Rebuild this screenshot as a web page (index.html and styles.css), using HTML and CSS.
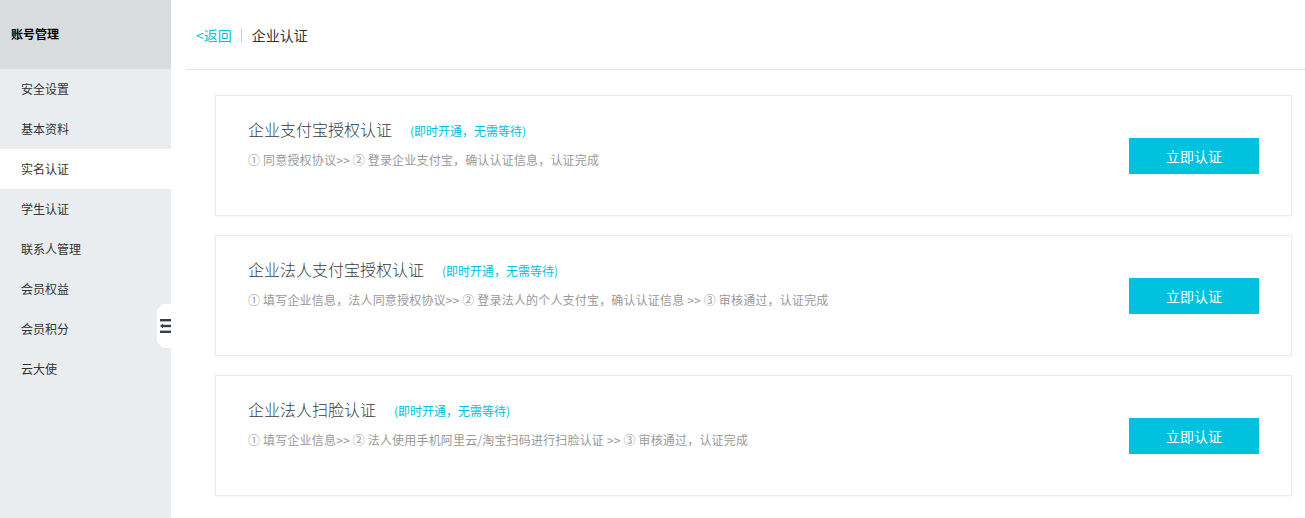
FILE: index.html
```html
<!DOCTYPE html>
<html lang="zh-CN">
<head>
<meta charset="utf-8">
<title>企业认证</title>
<link rel="stylesheet" href="styles.css">
</head>
<body>
<div class="page">
  <aside class="sidebar">
    <div class="side-title">账号管理</div>
    <ul class="side-menu">
      <li class="side-item">安全设置</li>
      <li class="side-item">基本资料</li>
      <li class="side-item active">实名认证</li>
      <li class="side-item">学生认证</li>
      <li class="side-item">联系人管理</li>
      <li class="side-item">会员权益</li>
      <li class="side-item">会员积分</li>
      <li class="side-item">云大使</li>
    </ul>
    <div class="collapse-tab">
      <svg width="11" height="14" viewBox="0 0 11 14" aria-hidden="true">
        <rect x="0" y="0" width="11" height="2.4" fill="#373d41"/>
        <rect x="3" y="5.8" width="8" height="2.4" fill="#373d41"/>
        <polygon points="0,7 3,4.6 3,9.4" fill="#373d41"/>
        <rect x="0" y="11.6" width="11" height="2.4" fill="#373d41"/>
      </svg>
    </div>
  </aside>
  <main class="main">
    <header class="main-header">
      <a class="back">&lt;返回</a>
      <span class="sep"></span>
      <span class="crumb">企业认证</span>
    </header>
    <section class="cards">
      <div class="card">
        <div class="card-info">
          <div class="card-title">企业支付宝授权认证<span class="tag">(即时开通，无需等待)</span></div>
          <div class="card-steps">① 同意授权协议&gt;&gt; ② 登录企业支付宝，确认认证信息，认证完成</div>
        </div>
        <button class="btn">立即认证</button>
      </div>
      <div class="card">
        <div class="card-info">
          <div class="card-title">企业法人支付宝授权认证<span class="tag">(即时开通，无需等待)</span></div>
          <div class="card-steps">① 填写企业信息，法人同意授权协议&gt;&gt; ② 登录法人的个人支付宝，确认认证信息 &gt;&gt; ③ 审核通过，认证完成</div>
        </div>
        <button class="btn">立即认证</button>
      </div>
      <div class="card">
        <div class="card-info">
          <div class="card-title">企业法人扫脸认证<span class="tag">(即时开通，无需等待)</span></div>
          <div class="card-steps">① 填写企业信息&gt;&gt; ② 法人使用手机阿里云/淘宝扫码进行扫脸认证 &gt;&gt; ③ 审核通过，认证完成</div>
        </div>
        <button class="btn">立即认证</button>
      </div>
    </section>
  </main>
</div>
</body>
</html>
```

FILE: styles.css
```css
* { box-sizing: border-box; }
html, body {
  margin: 0;
  padding: 0;
  background: #fff;
  font-family: "Noto Sans CJK SC", "Noto Sans", sans-serif;
  color: #373d41;
}
.page {
  display: flex;
  min-height: 100vh;
}
.sidebar {
  position: relative;
  width: 171px;
  flex: 0 0 171px;
  background: #eaedf0;
}
.side-title {
  height: 69px;
  line-height: 68px;
  padding-left: 11px;
  font-size: 12px;
  font-weight: bold;
  color: #000;
  background: #d9dcdf;
}
.side-menu {
  list-style: none;
  margin: 0;
  padding: 0;
}
.side-item {
  height: 40px;
  line-height: 39px;
  padding-left: 21px;
  font-size: 12px;
  color: #333;
}
.side-item.active {
  background: #fff;
}
.collapse-tab {
  position: absolute;
  right: 0;
  top: 304px;
  width: 14px;
  height: 44px;
  background: #fff;
  clip-path: polygon(40% 0, 100% 0, 100% 100%, 40% 100%, 0 86%, 0 14%);
  display: flex;
  align-items: center;
  justify-content: flex-end;
}
.main {
  flex: 1;
  min-width: 0;
}
.main-header {
  height: 70px;
  margin-left: 15px;
  padding-left: 10px;
  border-bottom: 1px solid #e3e5e6;
  display: flex;
  align-items: center;
  font-size: 14px;
}
.back {
  color: #00c1de;
  cursor: pointer;
}
.sep {
  width: 1px;
  height: 14px;
  background: #c8ccd0;
  margin: 0 10px 0 9px;
}
.crumb {
  color: #333;
}
.cards {
  padding: 25px 13px 20px 44px;
  display: flex;
  flex-direction: column;
  gap: 19px;
}
.card {
  height: 121px;
  border: 1px solid #ebebeb;
  box-shadow: 0 0 3px rgba(0, 0, 0, 0.06);
  padding: 0 32px;
  display: flex;
  align-items: center;
  justify-content: space-between;
}
.card-info {
  align-self: flex-start;
  padding-top: 21px;
}
.card-title {
  font-size: 16px;
  line-height: 24px;
  color: #373d41;
  font-weight: 300;
}
.tag {
  font-size: 12px;
  color: #00c1de;
  margin-left: 18px;
  font-weight: 400;
}
.card-steps {
  margin-top: 7px;
  font-size: 12px;
  line-height: 20px;
  color: #999;
  letter-spacing: 0.18px;
}
.btn {
  width: 130px;
  height: 36px;
  border: none;
  background: #00c1de;
  color: #fff;
  font-family: inherit;
  font-size: 14px;
  cursor: pointer;
  margin-top: 1px;
}
```
